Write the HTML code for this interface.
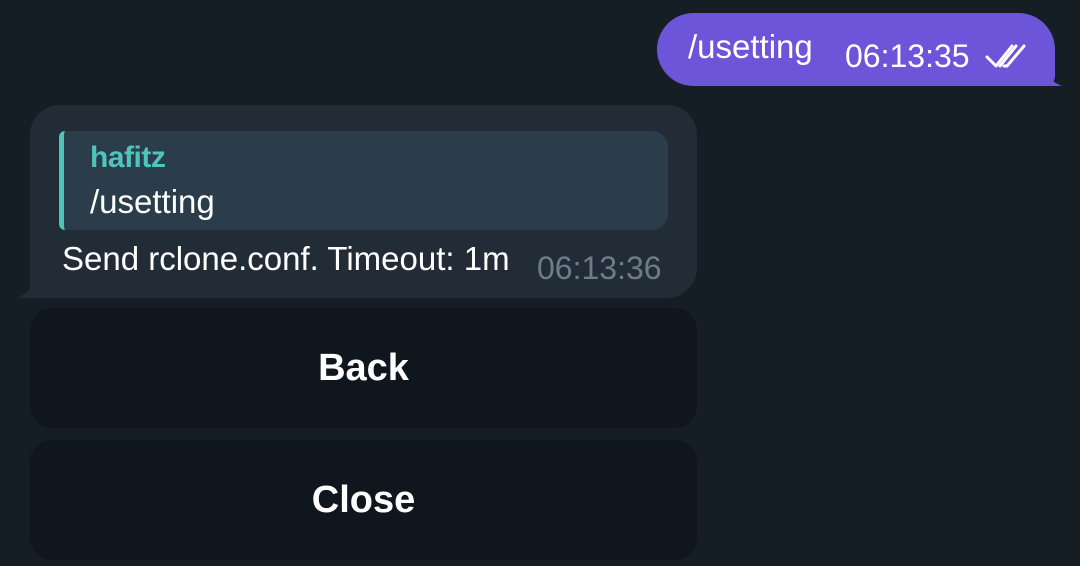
<!DOCTYPE html>
<html><head><style>
body{margin:0;width:1080px;height:566px;background:#151d25;overflow:hidden;position:relative;font-family:"Liberation Sans",sans-serif;color:#fff}
.out{position:absolute;left:657px;top:13px;width:398px;height:73px;background:#6c55d9;border-radius:37px 37px 10px 37px}
.in{position:absolute;left:30px;top:105px;width:667px;height:193px;background:#222c37;border-radius:30px 30px 30px 10px}
.q{position:absolute;left:59px;top:131px;width:609px;height:99px;background:#2b3d4a;border-radius:6px 16px 16px 6px;border-left:5px solid #4fc4bc;box-sizing:border-box}
.btn{position:absolute;left:30px;width:667px;height:120px;background:#0f161e;border-radius:22px;display:flex;align-items:center;justify-content:center;font-size:38px;font-weight:bold}
div{white-space:nowrap}
</style></head><body>
<div class="out"></div>
<svg style="position:absolute;left:1030px;top:50px" width="40" height="37"><path d="M0 0 C8 20 18 30 32 36 L0 36Z" fill="#6c55d9"/></svg>
<div style="position:absolute;left:688px;top:28px;font-size:33px">/usetting</div>
<div style="position:absolute;left:845px;top:38px;font-size:32px">06:13:35</div>
<svg style="position:absolute;left:984px;top:42px" width="48" height="30"><path d="M3 15 L12 24 L28 4 M16 24 L32 4 M20 24 L23 24 L40 4" fill="none" stroke="#fff" stroke-width="3" stroke-linecap="round" stroke-linejoin="round"/></svg>
<div class="in"></div>
<svg style="position:absolute;left:14px;top:268px" width="30" height="31"><path d="M30 0 L30 30 L2 30 C14 26 22 16 24 0Z" fill="#222c37"/></svg>
<div class="q"></div>
<div style="position:absolute;left:90px;top:141px;font-size:30px;color:#4fc4bc;font-weight:bold;letter-spacing:-0.5px">hafitz</div>
<div style="position:absolute;left:90px;top:183px;font-size:33px">/usetting</div>
<div style="position:absolute;left:62px;top:240px;font-size:33px">Send rclone.conf. Timeout: 1m</div>
<div style="position:absolute;left:537px;top:250px;font-size:32px;color:#6e7c8a">06:13:36</div>
<div class="btn" style="top:308px">Back</div>
<div class="btn" style="top:440px">Close</div>
</body></html>
